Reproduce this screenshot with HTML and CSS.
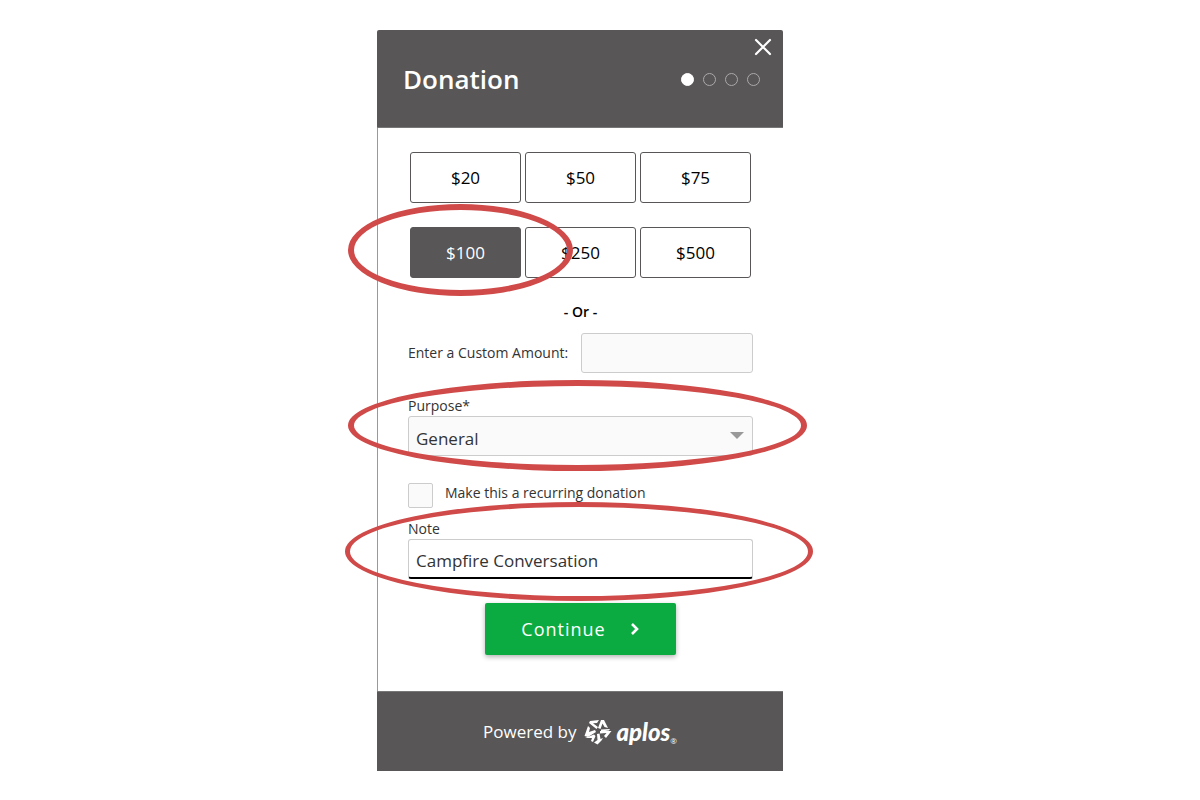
FILE: index.html
```html
<!DOCTYPE html>
<html lang="en">
<head>
    <meta charset="UTF-8">
    <meta name="viewport" content="width=device-width, initial-scale=1.0">
    <title>Donation</title>
    <link rel="stylesheet" href="styles.css">
</head>
<body>
    <form class="donation">
        <header class="donation-header">
            <button type="button" class="close" aria-label="Close">
                <svg width="18" height="18" viewBox="0 0 18 18"><path d="M2 2L16 16M16 2L2 16" stroke="#fff" stroke-width="2.2" stroke-linecap="round"/></svg>
            </button>
            <div class="title-row">
                <h1>Donation</h1>
                <div class="steps">
                    <span class="step active"></span>
                    <span class="step"></span>
                    <span class="step"></span>
                    <span class="step"></span>
                </div>
            </div>
        </header>

        <main class="donation-body">
            <div class="amounts">
                <button type="button" class="amount">$20</button>
                <button type="button" class="amount">$50</button>
                <button type="button" class="amount">$75</button>
                <div class="amount-cell">
                    <button type="button" class="amount selected">$100</button>
                    <span class="circle circle-amount"></span>
                </div>
                <button type="button" class="amount">$250</button>
                <button type="button" class="amount">$500</button>
            </div>

            <p class="or">- Or -</p>

            <div class="custom-row">
                <label for="custom">Enter a Custom Amount:</label>
                <input type="text" id="custom" class="field">
            </div>

            <div class="group">
                <label for="purpose">Purpose*</label>
                <div class="select-wrap">
                    <select id="purpose" class="field">
                        <option>General</option>
                    </select>
                    <span class="arrow"></span>
                </div>
                <span class="circle circle-purpose"></span>
            </div>

            <div class="check-row">
                <input type="checkbox" id="recurring" class="check">
                <label for="recurring">Make this a recurring donation</label>
            </div>

            <div class="group">
                <label for="note">Note</label>
                <input type="text" id="note" class="field note" value="Campfire Conversation">
                <span class="circle circle-note"></span>
            </div>

            <button type="submit" class="continue">
                <span>Continue</span>
                <svg width="10" height="14" viewBox="0 0 10 14"><path d="M2 2L7 7L2 12" fill="none" stroke="#fff" stroke-width="2.6"/></svg>
            </button>
        </main>

        <footer class="donation-footer">
            <span>Powered by</span>
            <a href="#" class="logo">
                <!-- aplos pinwheel -->
                <svg width="28" height="26" viewBox="0 0 28 26" fill="#fff">
                    <path d="M6 2L15 1L13 4L9 4.200L14 8L12.500 10L5 4Z"/>
                    <path d="M17 1L20 1L24 9L20.500 8L18.500 4.500L16.500 10L14 9Z"/>
                    <path d="M27.500 12L22 19L20 17L22.500 14L16 14.500L16 12Z"/>
                    <path d="M19 19L17.500 21.500L13.500 25.500L10 23.500L13.500 21L13 15L15.500 14.500L16.500 20Z"/>
                    <path d="M4 7L6 9L5 13L11 11L12 13L4 18L0.500 17Z"/>
                    <path d="M1 19L10 15.500L11.500 17L9 23L7 22L8 19Z"/>
                    <path d="M17 10.500L26 10L25 11.500L17 12.500Z"/>
                </svg>
                <span class="logo-name">aplos</span>
                <span class="reg">®</span>
            </a>
        </footer>
    </form>
</body>
</html>
```

FILE: styles.css
```css
* {
    margin: 0;
    padding: 0;
    box-sizing: border-box;
}

body {
    font-family: 'Open Sans', 'Noto Sans', sans-serif;
    background-color: #ffffff;
    color: #333333;
    font-size: 14px;
    line-height: 20px;
    padding: 30px 20px;
}

button, input, select {
    font-family: inherit;
}

.donation {
    width: 100%;
    max-width: 406px;
    margin: 0 auto;
    position: relative;
    left: -20px;
}

.donation-header {
    background-color: #585656;
    border-bottom: 1px solid #777777;
    border-radius: 2px 2px 0 0;
    padding: 8px 11px 30px 26px;
}

.close {
    display: block;
    width: 18px;
    height: 18px;
    margin-left: auto;
    border: none;
    background: none;
    cursor: pointer;
}

.close svg {
    display: block;
}

.title-row {
    display: flex;
    justify-content: space-between;
    align-items: center;
    margin-top: 5px;
    padding-right: 12px;
}

h1 {
    color: #ffffff;
    font-size: 26px;
    font-weight: 600;
    line-height: 36px;
}

.steps {
    display: flex;
    gap: 9px;
}

.step {
    width: 13px;
    height: 13px;
    border: 1px solid #aaaaaa;
    border-radius: 50%;
}

.step.active {
    background-color: #ffffff;
    border-color: #ffffff;
}

.donation-body {
    border-left: 1px solid #999999;
    padding: 24px 30px 36px;
}

.amounts {
    display: grid;
    grid-template-columns: repeat(3, 1fr);
    gap: 24px 4px;
    padding: 0 2px;
}

.amount-cell {
    position: relative;
}

.amount {
    width: 100%;
    height: 51px;
    background-color: #ffffff;
    border: 1px solid #585656;
    border-radius: 3px;
    color: #000000;
    font-size: 17px;
    cursor: pointer;
}

.amount.selected {
    background-color: #585656;
    color: #ffffff;
}

.or {
    margin-top: 24px;
    color: #000000;
    font-weight: 600;
    text-align: center;
}

.custom-row {
    display: flex;
    align-items: center;
    justify-content: space-between;
    margin-top: 11px;
}

.field {
    display: block;
    width: 100%;
    height: 40px;
    padding: 4px 7px 0;
    background-color: #fafafa;
    border: 1px solid #cccccc;
    border-radius: 3px;
    color: #333333;
    font-size: 17px;
    appearance: none;
}

.custom-row .field {
    width: 50%;
}

.group {
    position: relative;
}

.custom-row + .group {
    margin-top: 23px;
}

.group label {
    display: block;
}

.select-wrap {
    position: relative;
}

.arrow {
    position: absolute;
    top: 16px;
    right: 9px;
    border: 7px solid transparent;
    border-top-color: #999999;
    border-bottom: none;
    pointer-events: none;
}

.check-row {
    display: flex;
    gap: 12px;
    margin-top: 27px;
}

.check {
    width: 25px;
    height: 25px;
    background-color: #fafafa;
    border: 1px solid #cccccc;
    border-radius: 2px;
    appearance: none;
}

.check-row + .group {
    margin-top: 11px;
}

.note {
    background-color: #ffffff;
    border-bottom: 2px solid #000000;
}

.continue {
    display: flex;
    align-items: center;
    justify-content: center;
    gap: 24px;
    width: 191px;
    height: 52px;
    margin: 24px auto 0;
    background-color: #0bab41;
    border: none;
    border-radius: 2px;
    box-shadow: 0 2px 5px rgba(0,0,0,0.3);
    color: #ffffff;
    font-size: 18px;
    letter-spacing: 1px;
    cursor: pointer;
}

.donation-footer {
    display: flex;
    align-items: center;
    justify-content: center;
    gap: 8px;
    height: 80px;
    background-color: #585656;
    border-top: 1px solid #777777;
    color: #ffffff;
    font-size: 17px;
}

.logo {
    display: flex;
    align-items: center;
    color: #ffffff;
    text-decoration: none;
}

.logo-name {
    margin-left: 4px;
    font-family: 'Lato', sans-serif;
    font-size: 24px;
    font-style: italic;
    font-weight: 900;
}

.reg {
    align-self: flex-end;
    font-size: 8px;
    line-height: 8px;
}

/* Hand-drawn style highlights over the form */
.circle {
    position: absolute;
    border: 6px solid #cf4a48;
    border-radius: 50%;
    pointer-events: none;
}

.circle-amount {
    inset: -23px -52px -18px -62px;
}

.circle-purpose {
    inset: -16px -54px -15px -60px;
}

.circle-note {
    inset: -17px -60px -22px -63px;
    border-width: 5px;
}
```
